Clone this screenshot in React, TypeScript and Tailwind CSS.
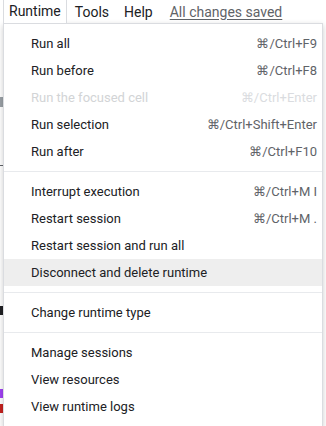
import React from 'react';

type Item = { label: string; shortcut?: string; disabled?: boolean; active?: boolean } | 'sep';

const items: Item[] = [
  { label: 'Run all', shortcut: '⌘/Ctrl+F9' },
  { label: 'Run before', shortcut: '⌘/Ctrl+F8' },
  { label: 'Run the focused cell', shortcut: '⌘/Ctrl+Enter', disabled: true },
  { label: 'Run selection', shortcut: '⌘/Ctrl+Shift+Enter' },
  { label: 'Run after', shortcut: '⌘/Ctrl+F10' },
  'sep',
  { label: 'Interrupt execution', shortcut: '⌘/Ctrl+M I' },
  { label: 'Restart session', shortcut: '⌘/Ctrl+M .' },
  { label: 'Restart session and run all' },
  { label: 'Disconnect and delete runtime', active: true },
  'sep',
  { label: 'Change runtime type' },
  'sep',
  { label: 'Manage sessions' },
  { label: 'View resources' },
  { label: 'View runtime logs' },
];

export default function App() {
  return (
    <div className="relative w-[326px] h-[426px] overflow-hidden bg-white text-[14px] text-[#202124] font-['Roboto',sans-serif]">
      {/* Menu bar */}
      <div className="flex items-end h-[23px] pl-[3px]">
        <div className="relative z-20 h-[24px] px-[5px] flex items-center bg-white border-l border-r border-[#dadce0] leading-none">
          Runtime
        </div>
        <div className="flex items-center h-[23px] gap-[15px] pl-[8px] leading-none">
          <span>Tools</span>
          <span>Help</span>
          <span className="ml-[2px] text-[#5f6368] underline underline-offset-2">All changes saved</span>
        </div>
      </div>

      {/* Page content peeking out at the left edge */}
      <div className="absolute left-0 top-[97px] bottom-0 w-[3px] flex flex-col gap-[6px]">
        <div className="h-[10px] bg-[#9aa0a6]" />
        <div className="h-px mt-[52px] bg-[#5f6368]" />
        <div className="h-[9px] mt-[134px] bg-[#202124]" />
        <div className="h-[9px] mt-[68px] bg-[#a142f4]" />
        <div className="h-[9px] bg-[#c5221f]" />
      </div>

      {/* Dropdown */}
      <div className="absolute left-[3px] top-[23px] w-[320px] z-10 bg-white border border-[#dadce0] shadow-[0_2px_6px_rgba(0,0,0,0.2)] pt-[6px] pb-[6px] text-[13px]">
        {items.map((item, i) =>
          item === 'sep' ? (
            <div key={i} className="my-[6px] h-px bg-[#e8eaed]" />
          ) : (
            <div
              key={i}
              className={`flex items-center justify-between h-[27px] pl-[27px] pr-[5px] ${item.active ? 'bg-[#eeeeee]' : ''} ${item.disabled ? 'text-[#d2d4d6]' : ''}`}
            >
              <span>{item.label}</span>
              {item.shortcut && (
                <span className={item.disabled ? 'text-[#dadce0]' : 'text-[#5f6368]'}>{item.shortcut}</span>
              )}
            </div>
          )
        )}
      </div>
    </div>
  );
}
